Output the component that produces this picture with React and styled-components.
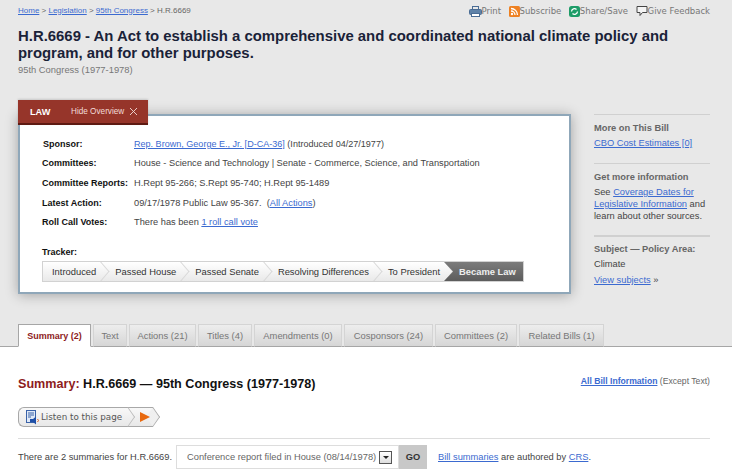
import styled, { createGlobalStyle } from "styled-components";

const GlobalStyle = createGlobalStyle`
  html, body {
    margin: 0;
    padding: 0;
    background: #fff;
  }
  body {
    font-family: "Liberation Sans", Arial, sans-serif;
    color: #333;
    overflow: hidden;
  }
`;

const TRACKER = ["Introduced", "Passed House", "Passed Senate", "Resolving Differences", "To President"];
const TABS = [
  ["Summary (2)", 73],
  ["Text", 34],
  ["Actions (21)", 67],
  ["Titles (4)", 54],
  ["Amendments (0)", 88],
  ["Cosponsors (24)", 89],
  ["Committees (2)", 82],
  ["Related Bills (1)", 85],
];

const App = () => (
  <Page>
    <GlobalStyle />
    <Band>
      <TopRow>
        <Crumbs>
          <Link>Home</Link> &gt; <Link>Legislation</Link> &gt; <Link>95th Congress</Link> &gt; H.R.6669
        </Crumbs>
        <Tools>
          <Tool>
            <svg width="13" height="11" viewBox="0 0 13 11">
              <rect x="3.500" y="0.500" width="6" height="3" fill="#e8e8e8" stroke="#4a6c94" />
              <rect x="0.500" y="3.500" width="12" height="5" rx="1" fill="#5f82a8" stroke="#4a6c94" />
              <rect x="2.500" y="7.500" width="8" height="3" fill="#fff" stroke="#4a6c94" />
            </svg>
            Print
          </Tool>
          <Tool>
            <svg width="11" height="11" viewBox="0 0 11 11">
              <rect width="11" height="11" rx="1.500" fill="#ee8122" />
              <circle cx="3" cy="8" r="1.200" fill="#fff" />
              <path d="M2 5a4 4 0 0 1 4 4M2 2.500A6.500 6.500 0 0 1 8.500 9" fill="none" stroke="#fff" strokeWidth="1.300" />
            </svg>
            Subscribe
          </Tool>
          <Tool>
            <svg width="11" height="11" viewBox="0 0 11 11">
              <rect width="11" height="11" rx="2.500" fill="#1d9c68" />
              <path d="M2.500 5.500a3 3 0 0 1 5-2M8.500 5.500a3 3 0 0 1-5 2" fill="none" stroke="#fff" strokeWidth="1.300" />
            </svg>
            Share/Save
          </Tool>
          <Tool>
            <svg width="12" height="12" viewBox="0 0 12 12">
              <path d="M1 1.500h10v6H6.500L4 10.500v-3H1z" fill="#f4f4f4" stroke="#444" />
            </svg>
            Give Feedback
          </Tool>
        </Tools>
      </TopRow>
      <Title>H.R.6669 - An Act to establish a comprehensive and coordinated national climate policy and program, and for other purposes.</Title>
      <Congress>95th Congress (1977-1978)</Congress>
      <Columns>
        <Overview>
          <LawTab>
            <LawLabel>LAW</LawLabel>
            <HideLabel>Hide Overview</HideLabel>
            <svg width="9" height="9" viewBox="0 0 9 9">
              <path d="M1 1l7 7M8 1l-7 7" stroke="#f2dcd8" strokeWidth="0.900" />
            </svg>
          </LawTab>
          <Card>
            <Facts>
              <Label $indent>Sponsor:</Label>
              <Value $size={9.05}><Link>Rep. Brown, George E., Jr. [D-CA-36]</Link> (Introduced 04/27/1977)</Value>
              <Label>Committees:</Label>
              <Value>House - Science and Technology | Senate - Commerce, Science, and Transportation</Value>
              <Label>Committee Reports:</Label>
              <Value>H.Rept 95-266; S.Rept 95-740; H.Rept 95-1489</Value>
              <Label>Latest Action:</Label>
              <Value>09/17/1978 Public Law 95-367.&nbsp; (<Link>All Actions</Link>)</Value>
              <Label>Roll Call Votes:</Label>
              <Value>There has been <Link>1 roll call vote</Link></Value>
            </Facts>
            <TrackerLabel>Tracker:</TrackerLabel>
            <Tracker>
              {TRACKER.map((step) => (
                <Step key={step}>{step}</Step>
              ))}
              <LastStep>Became Law</LastStep>
            </Tracker>
          </Card>
        </Overview>
        <Side>
          <SideBlock>
            <SideTitle>More on This Bill</SideTitle>
            <SideText><Link>CBO Cost Estimates [0]</Link></SideText>
          </SideBlock>
          <SideBlock>
            <SideTitle>Get more information</SideTitle>
            <SideText>See <Link>Coverage Dates for Legislative Information</Link> and learn about other sources.</SideText>
          </SideBlock>
          <SideBlock $thick>
            <SideTitle>Subject — Policy Area:</SideTitle>
            <SideText>Climate</SideText>
            <SubjectLink><Link>View subjects</Link> »</SubjectLink>
          </SideBlock>
        </Side>
      </Columns>
      <Tabs>
        {TABS.map(([name, width], i) => (
          <Tab key={name} $active={i === 0} $width={width}>{name}</Tab>
        ))}
      </Tabs>
    </Band>
    <Content>
      <SummaryHead>
        <SummaryTitle><Red>Summary:</Red> H.R.6669 — 95th Congress (1977-1978)</SummaryTitle>
        <AllInfo><BoldLink>All Bill Information</BoldLink> (Except Text)</AllInfo>
      </SummaryHead>
      <Listen>
        <ListenMain>
          <svg width="15" height="15" viewBox="0 0 15 15">
            <rect x="1.500" y="0.500" width="9" height="12" fill="#dfe9f7" stroke="#3a62a8" />
            <path d="M3 3h6M3 5h6M3 7h3" stroke="#3a62a8" />
            <path d="M5 9h3l3-2.500v8L8 12H5z" fill="#1f50a8" />
            <path d="M12.500 9l1 1.500-1 1.500" fill="none" stroke="#d8622a" />
          </svg>
          Listen to this page
        </ListenMain>
        <ListenPlay>
          <svg width="10" height="10" viewBox="0 0 10 10">
            <path d="M0 0l10 5-10 5z" fill="#e8690f" />
          </svg>
        </ListenPlay>
      </Listen>
      <Rule />
      <SummaryBar>
        <IntroText>There are 2 summaries for H.R.6669.</IntroText>
        <Picker>
          <span>Conference report filed in House (08/14/1978)</span>
          <PickerArrow />
        </Picker>
        <Go>GO</Go>
        <Authored><Link>Bill summaries</Link> are authored by <Link>CRS</Link>.</Authored>
      </SummaryBar>
    </Content>
  </Page>
);

const Page = styled.div`
  width: 732px;
  height: 469px;
  overflow: hidden;
`;

const Band = styled.div`
  height: 346px;
  padding: 0 22px 0 18px;
  background: #e8e8e8;
  border-bottom: 1px solid #a6a6a6;
  display: flex;
  flex-direction: column;
`;

const TopRow = styled.div`
  height: 20px;
  display: flex;
  justify-content: space-between;
  align-items: center;
`;

const Crumbs = styled.div`
  font-size: 8px;
  color: #666;
`;

const Link = styled.a`
  color: #3b6ad0;
  text-decoration: underline;
`;

const BoldLink = styled(Link)`
  font-weight: bold;
`;

const Tools = styled.div`
  display: flex;
  gap: 7.500px;
  padding-top: 2px;
`;

const Tool = styled.div`
  display: flex;
  align-items: center;
  font-family: "DejaVu Sans", Verdana, sans-serif;
  font-size: 8.500px;
  color: #777;
`;

const Title = styled.h1`
  margin: 8px 0 0;
  width: 680px;
  font-size: 14.900px;
  line-height: 17px;
  font-weight: bold;
  color: #1a2238;
`;

const Congress = styled.div`
  margin-top: 2px;
  font-size: 9.400px;
  line-height: 12px;
  color: #777;
`;

const Columns = styled.div`
  margin-top: 24px;
  display: flex;
  align-items: flex-start;
  justify-content: space-between;
`;

const Overview = styled.div`
  position: relative;
  padding-top: 14px;
  width: 553px;
`;

const LawTab = styled.div`
  position: absolute;
  left: 0;
  top: 0;
  z-index: 1;
  width: 130px;
  height: 25px;
  display: flex;
  align-items: center;
  box-sizing: border-box;
  padding: 0 10px 0 12px;
  background: #96352a;
  border-bottom: 2px solid #5e1a12;
  color: #fff;
  white-space: nowrap;
  box-shadow: 0 -1px 2px rgba(0, 0, 0, 0.15);
`;

const LawLabel = styled.span`
  width: 41px;
  font-size: 9.200px;
  font-weight: bold;
`;

const HideLabel = styled.span`
  flex: 1;
  font-size: 8.200px;
  color: #f2dcd8;
`;

const Card = styled.div`
  box-sizing: border-box;
  height: 180px;
  padding: 18px 22px 0;
  background: #fff;
  border: 2px solid #8fa7b9;
  box-shadow: 0 1px 12px rgba(0, 0, 0, 0.3);
`;

const Facts = styled.div`
  display: grid;
  grid-template-columns: 92px 1fr;
  grid-auto-rows: 19.600px;
  align-items: center;
  white-space: nowrap;
`;

const Label = styled.div`
  font-size: 9px;
  font-weight: bold;
  color: #111;
  padding-left: ${(p) => (p.$indent ? "1px" : "0")};
`;

const Value = styled.div`
  font-size: ${(p) => p.$size || 9.25}px;
  color: #444;
`;

const TrackerLabel = styled.div`
  margin-top: 14px;
  font-size: 9px;
  line-height: 12px;
  font-weight: bold;
  color: #111;
`;

const Tracker = styled.div`
  margin-top: 3px;
  box-sizing: border-box;
  width: 482px;
  height: 21px;
  padding-left: 9px;
  display: flex;
  overflow: hidden;
  border: 1px solid #d2d2d2;
  background: linear-gradient(#fff, #e9e9e9);
  font-size: 9.400px;
  white-space: nowrap;
`;

const Step = styled.div`
  position: relative;
  padding-right: 19px;
  display: flex;
  align-items: center;
  color: #333;
  &::after {
    content: "";
    position: absolute;
    right: 7.600px;
    top: 2px;
    width: 14.800px;
    height: 14.800px;
    box-sizing: border-box;
    border-top: 1px solid #d8d8d8;
    border-right: 1px solid #d8d8d8;
    transform: scaleX(0.857) rotate(45deg);
  }
`;

const LastStep = styled.div`
  position: relative;
  flex: 1;
  margin-left: -15px;
  padding-left: 15px;
  display: flex;
  align-items: center;
  color: #eee;
  font-weight: bold;
  background: linear-gradient(#7c7c7c, #5c5c5c);
  clip-path: polygon(0 0, 100% 0, 100% 100%, 0 100%, 9px 50%);
`;

const Side = styled.div`
  width: 116px;
  padding-top: 14px;
  display: flex;
  flex-direction: column;
`;

const SideBlock = styled.div`
  border-top: ${(p) => (p.$thick ? "2px" : "1px")} solid #d0d0d0;
  padding: ${(p) => (p.$thick ? "6px" : "7px")} 0 13px;
  &:first-child {
    padding-bottom: 14px;
  }
`;

const SideTitle = styled.div`
  font-size: 9.300px;
  line-height: 12px;
  font-weight: bold;
  color: #666;
  margin-bottom: 3px;
  white-space: nowrap;
`;

const SideText = styled.div`
  font-size: 9.300px;
  line-height: 12px;
  color: #444;
`;

const SubjectLink = styled(SideText)`
  margin-top: 4px;
`;

const Tabs = styled.div`
  margin-top: auto;
  display: flex;
  gap: 2px;
  height: 23px;
  margin-bottom: -1px;
`;

const Tab = styled.div`
  box-sizing: border-box;
  width: ${(p) => p.$width}px;
  display: flex;
  align-items: center;
  justify-content: center;
  font-size: ${(p) => (p.$active ? "9px" : "9.400px")};
  white-space: nowrap;
  font-weight: ${(p) => (p.$active ? "bold" : "normal")};
  color: ${(p) => (p.$active ? "#8e1c1c" : "#777")};
  border: 1px solid ${(p) => (p.$active ? "#a6a6a6" : "#d4d4d4")};
  border-bottom: ${(p) => (p.$active ? "1px solid #fff" : "1px solid #a6a6a6")};
  background: ${(p) => (p.$active ? "#fff" : "linear-gradient(#ededed, #d6d6d6)")};
`;

const Content = styled.div`
  padding: 0 22px 0 18px;
`;

const SummaryHead = styled.div`
  height: 30px;
  padding-top: 30px;
  display: flex;
  justify-content: space-between;
`;

const SummaryTitle = styled.h2`
  margin: 0;
  font-size: 12.600px;
  line-height: 15px;
  font-weight: bold;
  color: #111;
`;

const Red = styled.span`
  color: #8e1c1c;
`;

const AllInfo = styled.div`
  margin-top: -2px;
  font-size: 8.650px;
  line-height: 12px;
  color: #666;
`;

const Listen = styled.div`
  position: relative;
  width: 135px;
  height: 20px;
  display: flex;
  align-items: stretch;
  box-sizing: border-box;
  border: 1px solid #a8a8a8;
  border-right: none;
  border-radius: 6px 0 0 6px;
  background: linear-gradient(#f8f8f8, #e8e8e8);
  font-family: "DejaVu Sans", Verdana, sans-serif;
  font-size: 8.750px;
  color: #555;
  white-space: nowrap;
  &::after {
    content: "";
    position: absolute;
    left: 126.900px;
    top: 1.900px;
    width: 14.140px;
    height: 14.140px;
    box-sizing: border-box;
    border-top: 1px solid #a8a8a8;
    border-right: 1px solid #a8a8a8;
    background: linear-gradient(45deg, #efefef, #f0f0f0);
    transform: scaleX(0.7) rotate(45deg);
  }
`;

const ListenMain = styled.div`
  position: relative;
  flex: none;
  box-sizing: border-box;
  width: 109px;
  display: flex;
  align-items: center;
  gap: 1px;
  padding-left: 6px;
  &::after {
    content: "";
    position: absolute;
    right: -7.070px;
    top: 1.900px;
    width: 14.140px;
    height: 14.140px;
    box-sizing: border-box;
    border-top: 1px solid #bbb;
    border-right: 1px solid #bbb;
    transform: scaleX(0.7) rotate(45deg);
  }
`;

const ListenPlay = styled.div`
  position: relative;
  z-index: 1;
  flex: 1;
  padding-left: 12px;
  display: flex;
  align-items: center;
`;

const Rule = styled.div`
  margin-top: 11px;
  border-top: 1px solid #ddd;
`;

const SummaryBar = styled.div`
  margin-top: 6px;
  display: flex;
  align-items: center;
  font-size: 9.300px;
  color: #444;
  white-space: nowrap;
`;

const IntroText = styled.span`
  width: 158px;
`;

const Picker = styled.div`
  box-sizing: border-box;
  width: 223px;
  height: 24px;
  padding: 0 6px 0 10px;
  display: flex;
  align-items: center;
  justify-content: space-between;
  border: 1px solid #ddd;
  color: #666;
`;

const PickerArrow = styled.span`
  box-sizing: border-box;
  width: 13px;
  height: 13px;
  border: 1px solid #555;
  background: linear-gradient(#fff, #ddd);
  position: relative;
  &::after {
    content: "";
    position: absolute;
    left: 3px;
    top: 4px;
    border: 3px solid transparent;
    border-top-color: #222;
  }
`;

const Go = styled.div`
  width: 28px;
  height: 24px;
  display: flex;
  align-items: center;
  justify-content: center;
  background: #c8c8c8;
  font-weight: bold;
  color: #333;
`;

const Authored = styled.div`
  margin-left: 11px;
`;

export default App;
